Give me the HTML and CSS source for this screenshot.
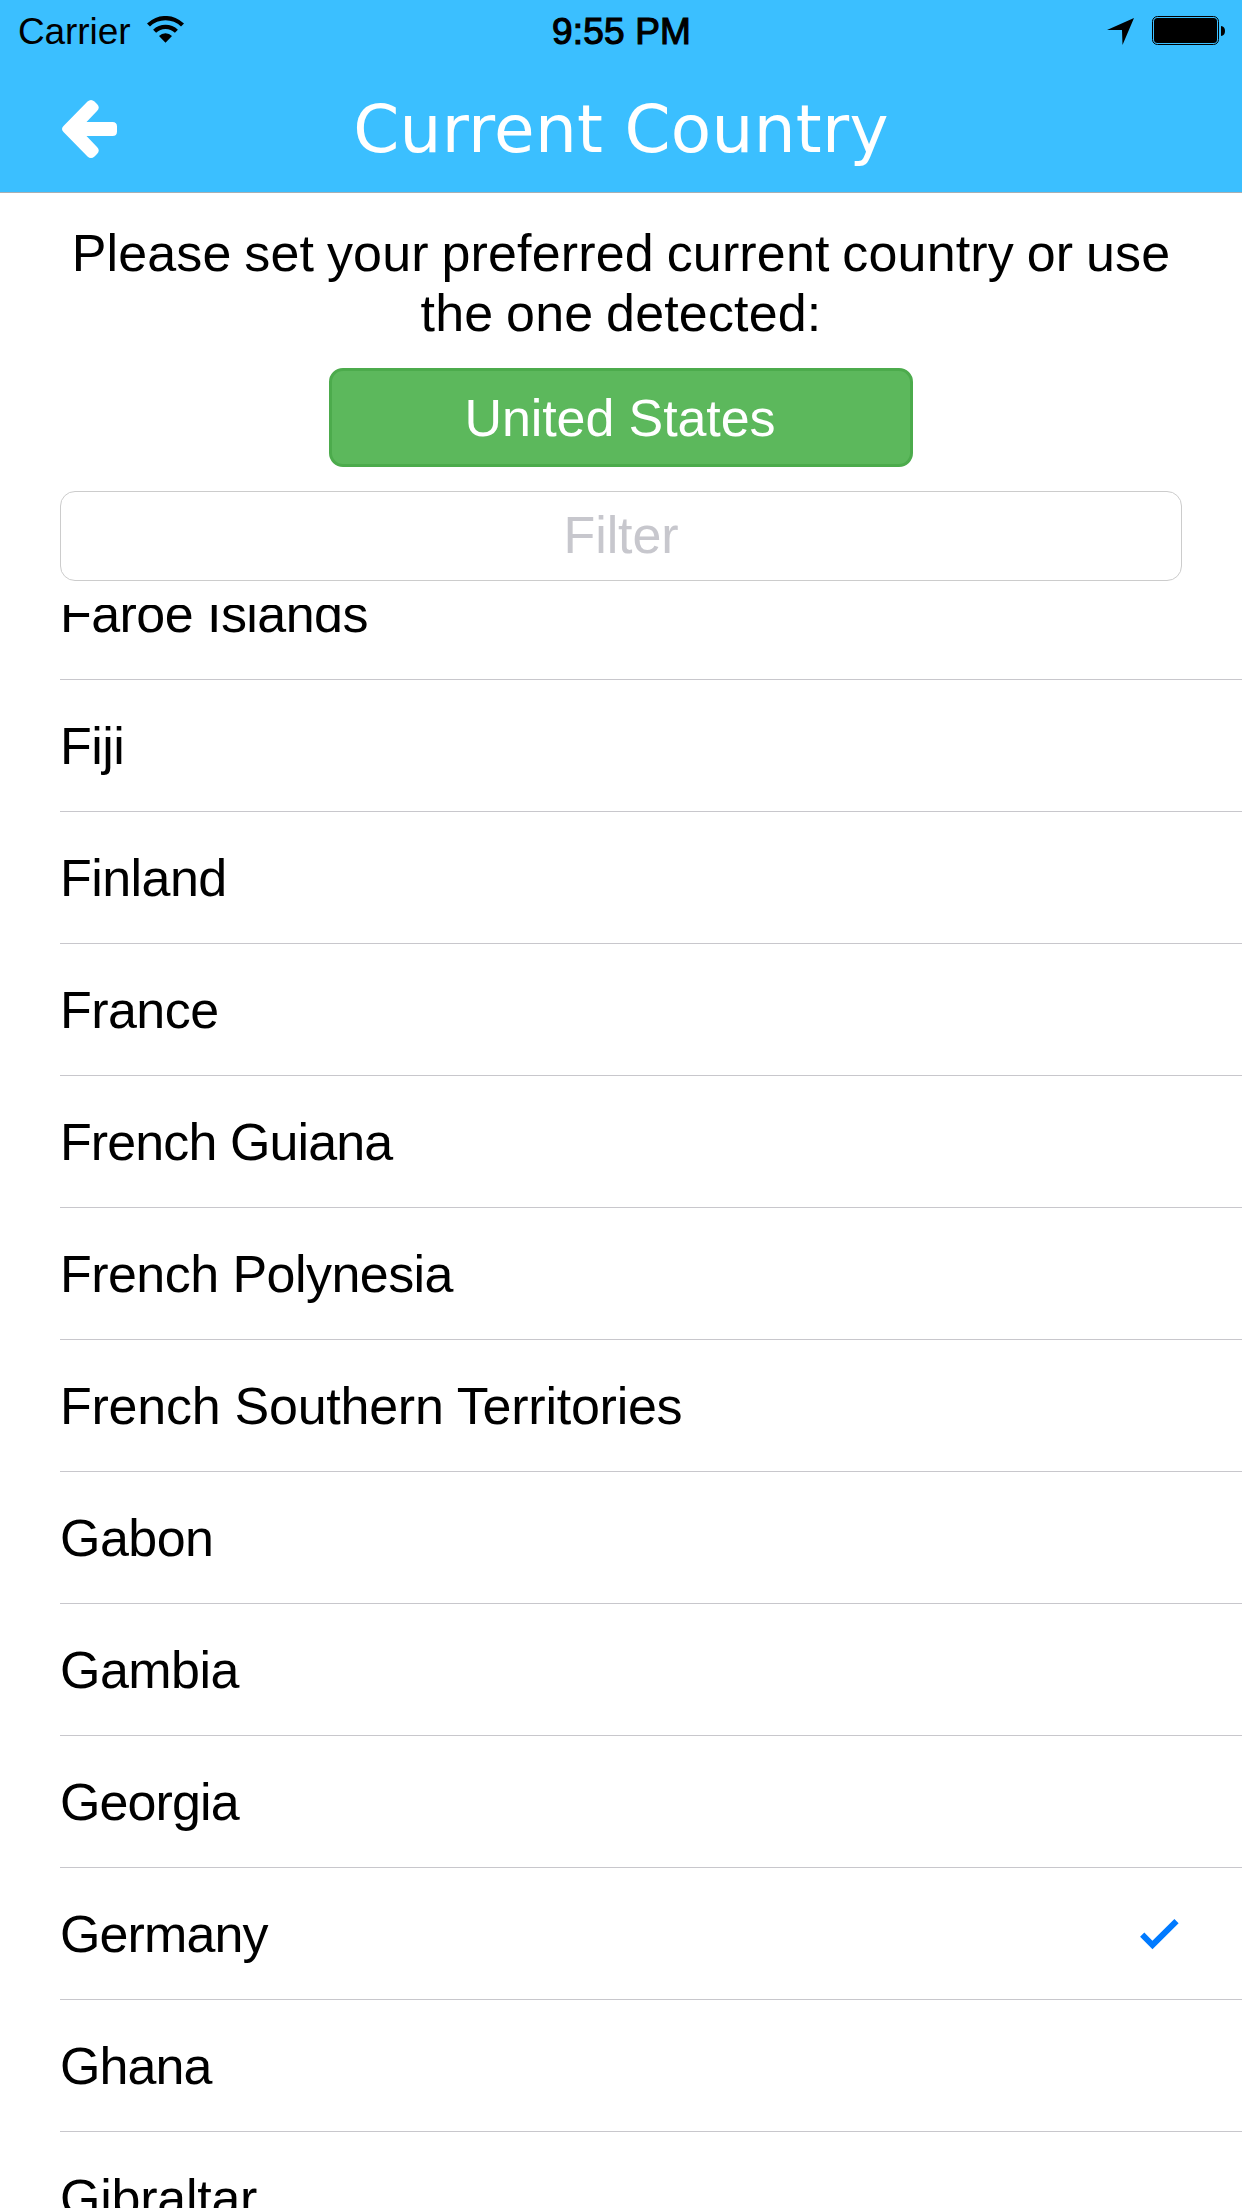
FILE: index.html
```html
<!DOCTYPE html>
<html lang="en">
<head>
<meta charset="utf-8">
<title>Current Country</title>
<link rel="stylesheet" href="styles.css">
</head>
<body>
<div class="screen">
  <header class="header">
    <div class="status">
      <div class="status-left">
        <span class="carrier">Carrier</span>
        <svg class="wifi" width="37" height="27" viewBox="0 0 37 27">
          <path d="M0 7.6A26.2 26.2 0 0 1 37 7.6L34 10.6A22 22 0 0 0 3 10.6ZM6.1 13.8A17.6 17.6 0 0 1 30.9 13.8L27.9 16.8A13.4 13.4 0 0 0 9.1 16.8ZM12 19.9A9.4 9.4 0 0 1 25 19.9L18.5 26.8Z"/>
        </svg>
      </div>
      <span class="time">9:55 PM</span>
      <div class="status-right">
        <svg class="location" width="27" height="27" viewBox="0 0 27 27"><path d="M27 0L15.5 27L15 12H0Z"/></svg>
        <svg class="battery" width="73" height="29" viewBox="0 0 73 29">
          <rect x=".5" y=".5" width="66" height="28" rx="5" fill="none" stroke="#000"/>
          <rect x="2" y="2" width="63" height="25" rx="3.5"/>
          <path d="M69 10Q73 10.500 73 15Q73 19.500 69 20Z"/>
        </svg>
      </div>
    </div>
    <div class="navbar">
      <svg class="back" width="55" height="58" viewBox="0 0 55 58">
        <path d="M1.500 26L25.500 1.500Q29-1.500 32.500 1.500L35 4Q38.500 7.500 35 11L24.500 22H50.500Q55 22 55 26.500V31.500Q55 36 50.500 36H24.500L35 47Q38.500 50.500 35 54L32.500 56.500Q29 59.500 25.500 56.500L1.500 32Q-1.500 29 1.500 26Z"/>
      </svg>
      <h1 class="title">Current Country</h1>
    </div>
  </header>
  <main class="content">
    <p class="prompt">Please set your preferred current country or use the one detected:</p>
    <button class="detected">United States</button>
    <input class="filter" type="text" placeholder="Filter">
    <ul class="list">
      <li class="row">Faroe Islands</li>
      <li class="row">Fiji</li>
      <li class="row">Finland</li>
      <li class="row">France</li>
      <li class="row tight">French Guiana</li>
      <li class="row">French Polynesia</li>
      <li class="row loose">French Southern Territories</li>
      <li class="row">Gabon</li>
      <li class="row">Gambia</li>
      <li class="row tight">Georgia</li>
      <li class="row tight">Germany
        <svg class="check" width="39" height="31" viewBox="0 0 39 31"><path d="M2.200 15.700L12.500 26L36.500 2.200"/></svg>
      </li>
      <li class="row tight">Ghana</li>
      <li class="row loose">Gibraltar</li>
    </ul>
  </main>
</div>
</body>
</html>
```

FILE: styles.css
```css
* {
  box-sizing: border-box;
}

body {
  margin: 0;
  background: #fff;
  color: #000;
  font-family: "Liberation Sans", Arial, sans-serif;
  font-size: 52px;
  letter-spacing: -0.1px;
}

.screen {
  display: flex;
  flex-direction: column;
  width: 1242px;
  height: 2208px;
  overflow: hidden;
}

.header {
  flex: none;
  height: 193px;
  background: #3bbfff;
  border-bottom: 1px solid #a9afb3;
}

.status {
  display: grid;
  grid-template-columns: 1fr auto 1fr;
  height: 60px;
  padding: 0 17px 0 18px;
  font-size: 37px;
  line-height: 64px;
}

.status-left,
.status-right {
  display: flex;
  align-items: flex-start;
}

.status-right {
  justify-content: flex-end;
  gap: 18px;
}

.carrier {
  letter-spacing: -0.1px;
}

.wifi {
  margin: 16px 0 0 17px;
}

.time {
  letter-spacing: 0.2px;
  -webkit-text-stroke: 1.2px #000;
}

.location {
  margin-top: 18px;
}

.battery {
  margin-top: 16px;
}

.navbar {
  display: grid;
  grid-template-columns: 62px 1fr 62px;
  height: 132px;
}

.back {
  margin: 40px 0 0 62px;
  fill: #fff;
}

.title {
  margin: 0;
  color: #fff;
  font-family: "DejaVu Sans", Verdana, sans-serif;
  font-size: 66px;
  font-weight: 400;
  letter-spacing: 0.3px;
  line-height: 140px;
  text-align: center;
}

.content {
  display: flex;
  flex: 1;
  flex-direction: column;
  min-height: 0;
  padding-left: 60px;
}

.prompt {
  width: 1122px;
  margin: 30px 0 0;
  letter-spacing: 0.15px;
  line-height: 60px;
  text-align: center;
  word-spacing: -1.8px;
}

.detected {
  width: 584px;
  height: 99px;
  margin: 25px 0 0 269px;
  padding: 1px 2px 0 0;
  background: #5cb85c;
  border: 3px solid #4cab4c;
  border-radius: 14px;
  color: #fff;
  font: inherit;
  letter-spacing: inherit;
}

.filter {
  width: 1122px;
  height: 90px;
  margin: 24px 0;
  padding: 0 0 2px;
  background: #fff;
  border: 1px solid #ccc;
  border-radius: 15px;
  font: inherit;
  letter-spacing: inherit;
  text-align: center;
}

.filter::placeholder {
  color: #c7c7cd;
}

.list {
  display: flex;
  flex: 1;
  flex-direction: column;
  justify-content: flex-start;
  min-height: 0;
  margin: 0;
  padding: 0;
  overflow: hidden;
  list-style: none;
}

.row {
  display: flex;
  flex: none;
  align-items: center;
  justify-content: space-between;
  height: 132px;
  padding-right: 63px;
  border-bottom: 1px solid #c8c7cc;
  letter-spacing: -0.55px;
}

.row.tight {
  letter-spacing: -0.9px;
}

.row.loose {
  letter-spacing: -0.25px;
}

.row:first-child {
  margin-top: -57px;
}

.check {
  margin-top: 2px;
  fill: none;
  stroke: #007aff;
  stroke-width: 6;
}
```
